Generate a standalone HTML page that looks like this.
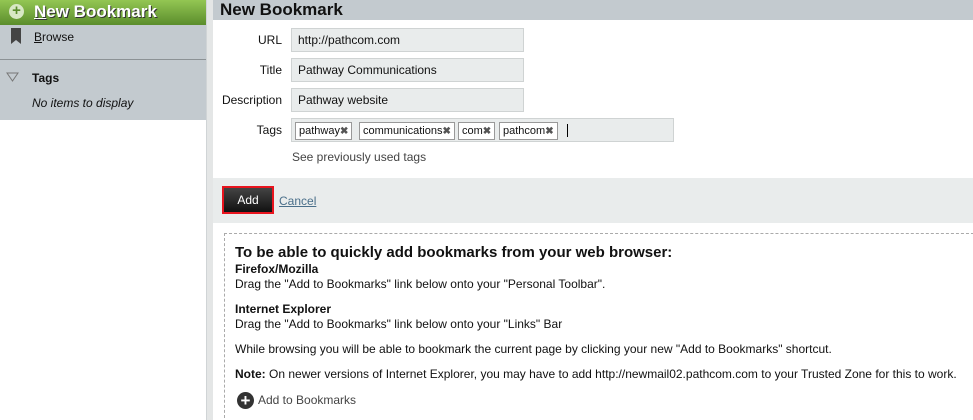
<!DOCTYPE html>
<html><head><style>
*{margin:0;padding:0;box-sizing:border-box}
html,body{width:973px;height:420px;overflow:hidden}
body{background:#fff;font-family:"Liberation Sans",sans-serif;font-size:12px;color:#111;position:relative}
.a{position:absolute}
.side{left:0;top:0;width:206px;height:120px;background:#c3cacf}
.hd{left:0;top:0;width:206px;height:25px;background:linear-gradient(#93c653,#5b8d2c)}
.sep{left:206px;top:0;width:7px;height:420px;background:#e4e6e6;border-left:1px solid #d0d4d6}
.mh{left:213px;top:0;width:760px;height:20px;background:#c3cacf;font-weight:bold;font-size:17px;padding-left:7px;line-height:20px}
.lbl{width:70px;text-align:right;font-size:12px}
.box{background:#e9ecec;border:1px solid #cfd3d3;height:24px;line-height:22px;padding-left:6px;font-size:12px}
.tag{position:absolute;top:3px;height:18px;border:1px solid #999;background:#fff;font-size:11px;line-height:16px;padding:0 3px}
.tag b{color:#555;font-size:10px}
</style></head><body>
<div class="a side"></div>
<div class="a hd"></div>
<div class="a" style="left:9px;top:4px;width:15px;height:15px;border-radius:50%;background:#d8e8c4;color:#5b8d2c;font-weight:bold;font-size:15px;line-height:14px;text-align:center">+</div>
<div class="a" style="left:34px;top:2px;color:#fff;font-weight:bold;font-size:17px;text-shadow:1px 1px 0 #333"><u>N</u>ew Bookmark</div>
<svg class="a" style="left:10px;top:28px" width="12" height="17"><path d="M1 0h10v16l-5-4-5 4z" fill="#444"/></svg>
<div class="a" style="left:34px;top:30px;font-size:12px"><u>B</u>rowse</div>
<div class="a" style="left:0;top:59px;width:206px;height:1px;background:#8c9295"></div>
<svg class="a" style="left:6px;top:72px" width="13" height="10"><path d="M1 1h11l-5.5 8z" fill="none" stroke="#777"/></svg>
<div class="a" style="left:32px;top:71px;font-weight:bold">Tags</div>
<div class="a" style="left:32px;top:96px;font-style:italic">No items to display</div>
<div class="a sep"></div>
<div class="a mh">New Bookmark</div>
<div class="a lbl" style="left:212px;top:33px">URL</div>
<div class="a lbl" style="left:212px;top:63px">Title</div>
<div class="a lbl" style="left:212px;top:93px">Description</div>
<div class="a lbl" style="left:212px;top:123px">Tags</div>
<div class="a box" style="left:291px;top:28px;width:233px">http://pathcom.com</div>
<div class="a box" style="left:291px;top:58px;width:233px">Pathway Communications</div>
<div class="a box" style="left:291px;top:88px;width:233px">Pathway website</div>
<div class="a box" style="left:291px;top:118px;width:383px;padding:0">
<span class="tag" style="left:3px">pathway<b>✖</b></span>
<span class="tag" style="left:67px">communications<b>✖</b></span>
<span class="tag" style="left:166px">com<b>✖</b></span>
<span class="tag" style="left:207px">pathcom<b>✖</b></span>
<span class="a" style="left:275px;top:5px;width:1px;height:13px;background:#000"></span>
</div>
<div class="a" style="left:292px;top:150px;color:#444">See previously used tags</div>
<div class="a" style="left:213px;top:178px;width:760px;height:45px;background:#e9ecec"></div>
<div class="a" style="left:222px;top:186px;width:52px;height:28px;border:2px solid #e8141e;background:linear-gradient(#444,#111);color:#fff;text-align:center;line-height:24px;font-size:12px">Add</div>
<div class="a" style="left:279px;top:194px;color:#4a6f8a;text-decoration:underline">Cancel</div>
<div class="a" style="left:224px;top:233px;width:760px;height:190px;border:1px dashed #aaa"></div>
<div class="a" style="left:235px;top:244px;font-weight:bold;font-size:15px">To be able to quickly add bookmarks from your web browser:</div>
<div class="a" style="left:235px;top:262px;font-weight:bold">Firefox/Mozilla</div>
<div class="a" style="left:235px;top:277px">Drag the "Add to Bookmarks" link below onto your "Personal Toolbar".</div>
<div class="a" style="left:235px;top:302px;font-weight:bold">Internet Explorer</div>
<div class="a" style="left:235px;top:317px">Drag the "Add to Bookmarks" link below onto your "Links" Bar</div>
<div class="a" style="left:235px;top:342px">While browsing you will be able to bookmark the current page by clicking your new "Add to Bookmarks" shortcut.</div>
<div class="a" style="left:235px;top:367px"><b>Note:</b> On newer versions of Internet Explorer, you may have to add http://newmail02.pathcom.com to your Trusted Zone for this to work.</div>
<div class="a" style="left:237px;top:392px;width:17px;height:17px;border-radius:50%;background:#333;color:#fff;font-weight:bold;font-size:17px;line-height:17px;text-align:center">+</div>
<div class="a" style="left:258px;top:393px;color:#444">Add to Bookmarks</div>
</body></html>
